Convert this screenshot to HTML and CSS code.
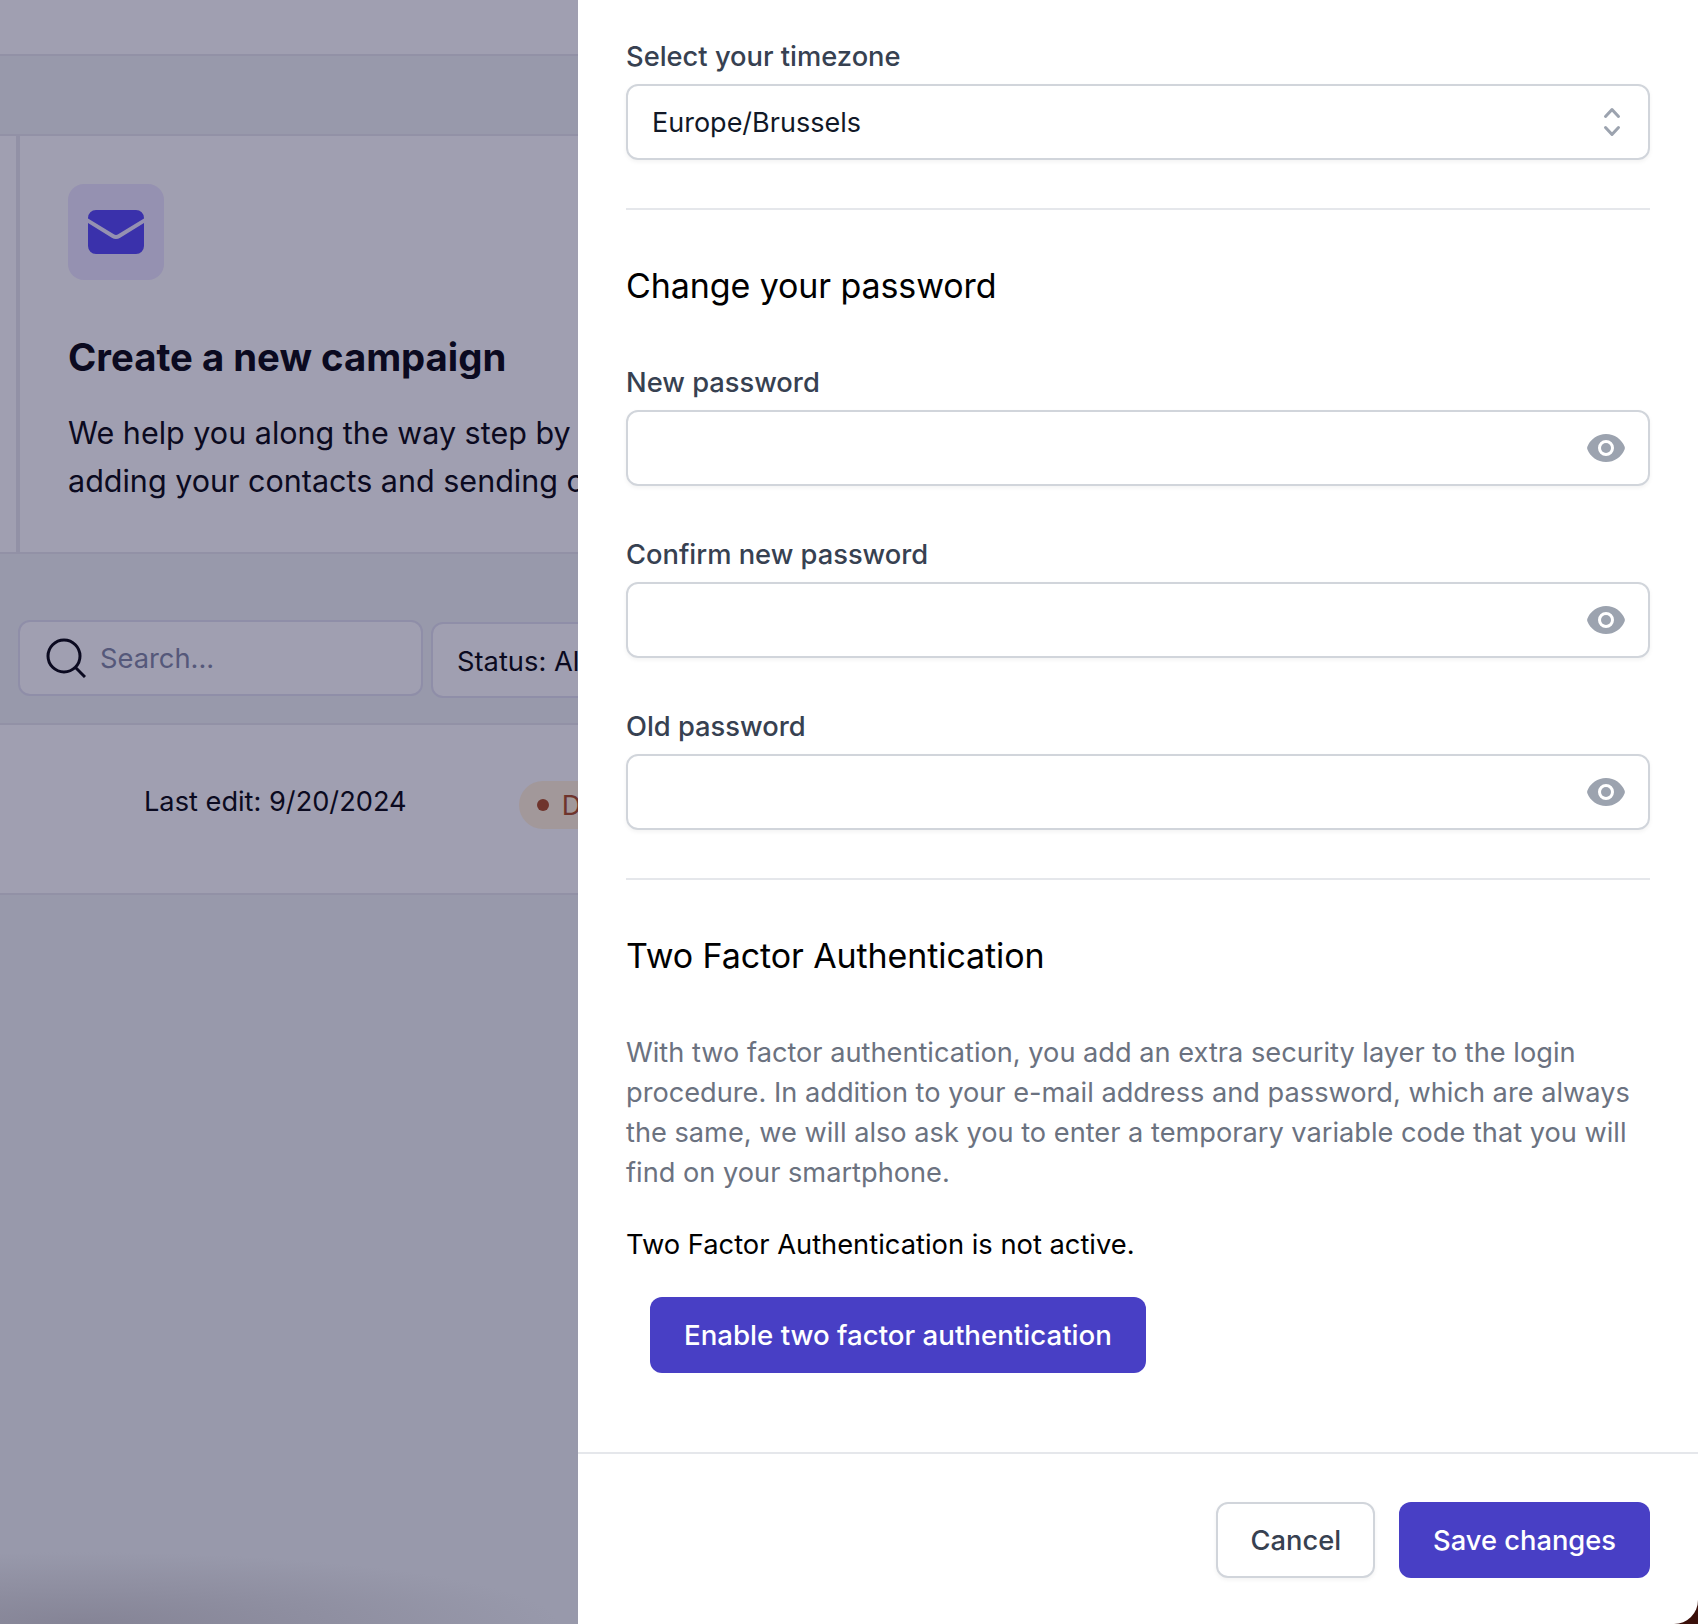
FILE: index.html
```html
<!DOCTYPE html>
<html lang="en">
<head>
    <meta charset="UTF-8">
    <meta name="viewport" content="width=device-width, initial-scale=1.0">
    <title>Account settings</title>
    <link rel="stylesheet" href="styles.css">
</head>
<body>
    <div class="page">
        <!-- Dimmed dashboard behind the slide-over -->
        <div class="backdrop">
            <div class="top-band"></div>
            <div class="sub-band"></div>
            <div class="intro-row">
                <div class="intro-card">
                    <div class="icon-box">
                        <svg class="envelope" viewBox="0 0 24 24" aria-hidden="true">
                            <path d="M1.5 8.67v8.58a3 3 0 003 3h15a3 3 0 003-3V8.67l-8.928 5.493a3 3 0 01-3.144 0L1.5 8.67z"/>
                            <path d="M22.5 6.908V6.75a3 3 0 00-3-3h-15a3 3 0 00-3 3v.158l9.714 5.978a1.5 1.5 0 001.572 0L22.5 6.908z"/>
                        </svg>
                    </div>
                    <h2 class="intro-title">Create a new campaign</h2>
                    <p class="intro-text">We help you along the way step by step, from<br>adding your contacts and sending campaigns</p>
                </div>
            </div>
            <div class="filter-row">
                <div class="search-box">
                    <svg class="search-icon" viewBox="0 0 40 40" aria-hidden="true">
                        <circle cx="18" cy="18" r="16"/>
                        <line x1="29.5" y1="29.5" x2="39" y2="39"/>
                    </svg>
                    <span class="search-placeholder">Search...</span>
                </div>
                <div class="status-box">Status: All</div>
            </div>
            <div class="list-row">
                <span class="last-edit">Last edit: 9/20/2024</span>
                <span class="badge"><span class="badge-dot"></span>Draft</span>
            </div>
            <div class="backdrop-rest"></div>
        </div>

        <!-- Slide-over panel -->
        <div class="panel">
            <div class="panel-body">
                <label class="field-label">Select your timezone</label>
                <div class="field">
                    <span class="field-value">Europe/Brussels</span>
                    <svg class="chevrons" viewBox="0 0 20 20" aria-hidden="true">
                        <path fill-rule="evenodd" clip-rule="evenodd" d="M10 3a.75.75 0 01.55.24l3.25 3.5a.75.75 0 11-1.1 1.02L10 4.852 7.3 7.76a.75.75 0 01-1.1-1.02l3.25-3.5A.75.75 0 0110 3zm-3.76 9.2a.75.75 0 011.06.04l2.7 2.908 2.7-2.908a.75.75 0 111.1 1.02l-3.25 3.5a.75.75 0 01-1.1 0l-3.25-3.5a.75.75 0 01.04-1.06z"/>
                    </svg>
                </div>

                <hr class="divider">

                <h3 class="section-title">Change your password</h3>

                <label class="field-label spaced">New password</label>
                <div class="field">
                    <svg class="eye" viewBox="0 0 20 20" aria-hidden="true">
                        <path d="M10 12.5a2.5 2.5 0 100-5 2.5 2.5 0 000 5z"/>
                        <path fill-rule="evenodd" clip-rule="evenodd" d="M.664 10.59a1.651 1.651 0 010-1.186A10.004 10.004 0 0110 3c4.257 0 7.893 2.66 9.336 6.41.147.381.146.804 0 1.186A10.004 10.004 0 0110 17c-4.257 0-7.893-2.66-9.336-6.41zM14 10a4 4 0 11-8 0 4 4 0 018 0z"/>
                    </svg>
                </div>

                <label class="field-label spaced">Confirm new password</label>
                <div class="field">
                    <svg class="eye" viewBox="0 0 20 20" aria-hidden="true">
                        <path d="M10 12.5a2.5 2.5 0 100-5 2.5 2.5 0 000 5z"/>
                        <path fill-rule="evenodd" clip-rule="evenodd" d="M.664 10.59a1.651 1.651 0 010-1.186A10.004 10.004 0 0110 3c4.257 0 7.893 2.66 9.336 6.41.147.381.146.804 0 1.186A10.004 10.004 0 0110 17c-4.257 0-7.893-2.66-9.336-6.41zM14 10a4 4 0 11-8 0 4 4 0 018 0z"/>
                    </svg>
                </div>

                <label class="field-label spaced">Old password</label>
                <div class="field">
                    <svg class="eye" viewBox="0 0 20 20" aria-hidden="true">
                        <path d="M10 12.5a2.5 2.5 0 100-5 2.5 2.5 0 000 5z"/>
                        <path fill-rule="evenodd" clip-rule="evenodd" d="M.664 10.59a1.651 1.651 0 010-1.186A10.004 10.004 0 0110 3c4.257 0 7.893 2.66 9.336 6.41.147.381.146.804 0 1.186A10.004 10.004 0 0110 17c-4.257 0-7.893-2.66-9.336-6.41zM14 10a4 4 0 11-8 0 4 4 0 018 0z"/>
                    </svg>
                </div>

                <hr class="divider">

                <h3 class="section-title">Two Factor Authentication</h3>

                <p class="help-text">With two factor authentication, you add an extra security layer to the login procedure. In addition to your e-mail address and password, which are always the same, we will also ask you to enter a temporary variable code that you will find on your smartphone.</p>
                <p class="tfa-status">Two Factor Authentication is not active.</p>
                <button class="btn btn-primary btn-enable">Enable two factor authentication</button>
            </div>

            <div class="panel-footer">
                <button class="btn btn-secondary">Cancel</button>
                <button class="btn btn-primary">Save changes</button>
            </div>
        </div>
    </div>
</body>
</html>
```

FILE: styles.css
```css
:root {
    --dim-light: #a09fb1;
    --dim-dark: #9899ab;
    --dim-border: #9291a6;
    --dim-text: #0b0a20;
    --indigo: #483fc5;
    --line: #e5e7eb;
    --input-border: #d1d5db;
    --text-size: 27.3px;
}

* {
    box-sizing: border-box;
}

html, body {
    margin: 0;
    height: 100%;
}

body {
    font-family: Inter, "Liberation Sans", sans-serif;
    background: #3a0f0a;
}

.page {
    display: flex;
    height: 1624px;
    overflow: hidden;
}

/* Backdrop */
.backdrop {
    width: 578px;
    flex-shrink: 0;
    display: flex;
    flex-direction: column;
    overflow: hidden;
    background: var(--dim-dark);
    color: var(--dim-text);
}

.top-band {
    height: 56px;
    flex-shrink: 0;
    background: var(--dim-light);
    border-bottom: 2px solid var(--dim-border);
}

.sub-band {
    height: 80px;
    flex-shrink: 0;
    border-bottom: 2px solid var(--dim-border);
}

.intro-row {
    height: 418px;
    flex-shrink: 0;
    padding-left: 16px;
    background: var(--dim-light);
    border-bottom: 2px solid var(--dim-border);
}

.intro-card {
    width: 800px;
    height: 100%;
    padding: 48px 0 0 48px;
    border-left: 4px solid var(--dim-border);
}

.icon-box {
    width: 96px;
    height: 96px;
    display: flex;
    align-items: center;
    justify-content: center;
    border-radius: 16px;
    background: #9591b1;
}

.envelope {
    width: 64px;
    height: 64px;
    fill: #3a31ab;
}

.intro-title {
    margin: 49px 0 0;
    font-size: 38.3px;
    line-height: 56px;
    font-weight: 700;
    white-space: nowrap;
}

.intro-text {
    margin: 24px 0 0;
    font-size: 30.5px;
    line-height: 48px;
    white-space: nowrap;
}

.filter-row {
    height: 171px;
    flex-shrink: 0;
    display: flex;
    align-items: flex-start;
    gap: 8px;
    padding: 66px 0 0 18px;
    border-bottom: 2px solid var(--dim-border);
}

.search-box {
    width: 405px;
    height: 76px;
    flex-shrink: 0;
    display: flex;
    align-items: center;
    gap: 14px;
    padding-left: 26px;
    background: var(--dim-light);
    border: 2px solid #8f8ea8;
    border-radius: 12px;
}

.search-icon {
    width: 40px;
    height: 40px;
    fill: none;
    stroke: var(--dim-text);
    stroke-width: 3;
}

.search-placeholder {
    padding-top: 1px;
    font-size: var(--text-size);
    color: #55587a;
}

.status-box {
    width: 400px;
    height: 76px;
    flex-shrink: 0;
    margin-top: 2px;
    padding: 18px 24px 0;
    font-size: var(--text-size);
    line-height: 40px;
    background: var(--dim-light);
    border: 2px solid #8f8ea8;
    border-radius: 12px;
}

.list-row {
    height: 170px;
    flex-shrink: 0;
    display: flex;
    align-items: flex-start;
    padding: 57px 0 0 144px;
    background: var(--dim-light);
    border-bottom: 2px solid var(--dim-border);
}

.last-edit {
    font-size: 27.2px;
    line-height: 40px;
    white-space: nowrap;
}

.badge {
    flex-shrink: 0;
    display: flex;
    align-items: center;
    gap: 13px;
    height: 48px;
    margin: -1px 0 0 112px;
    padding: 0 24px 0 18px;
    border-radius: 24px;
    background: #a2989a;
    color: #6f342c;
    font-size: var(--text-size);
}

.badge-dot {
    width: 12px;
    height: 12px;
    border-radius: 50%;
    background: #6f342c;
}

.backdrop-rest {
    flex: 1;
    background: radial-gradient(ellipse 480px 72px at 80px 100%, #858496, rgba(133, 132, 150, 0));
}

/* Panel */
.panel {
    flex: 1;
    display: flex;
    flex-direction: column;
    background: #fff;
    border-bottom-right-radius: 24px;
}

.panel-body {
    flex: 1;
    padding: 36px 48px 0;
}

.field-label {
    display: block;
    margin-bottom: 7px;
    padding-top: 1px;
    font-size: var(--text-size);
    line-height: 40px;
    font-weight: 500;
    color: #374151;
}

.field-label.spaced {
    margin-top: 48px;
}

.field {
    height: 76px;
    display: flex;
    align-items: center;
    justify-content: space-between;
    padding: 0 22px 0 24px;
    border: 2px solid var(--input-border);
    border-radius: 12px;
    box-shadow: 0 2px 4px rgba(0, 0, 0, 0.05);
}

.field-value {
    font-size: 27px;
    color: #111827;
}

.chevrons {
    width: 40px;
    height: 40px;
    margin-left: auto;
    margin-right: -6px;
    fill: #9ca3af;
}

.eye {
    width: 40px;
    height: 40px;
    margin-left: auto;
    fill: #9ca3af;
}

.divider {
    height: 2px;
    margin: 48px 0;
    border: 0;
    background: var(--line);
}

.section-title {
    margin: 0;
    font-size: 34px;
    line-height: 56px;
    font-weight: 400;
    letter-spacing: -0.1px;
    color: #000;
}

.help-text {
    margin: 49px 0 0;
    font-size: 27.2px;
    line-height: 40px;
    color: #6b7280;
}

.tfa-status {
    margin: 32px 0 0;
    font-size: var(--text-size);
    line-height: 40px;
    color: #000;
}

.btn {
    height: 76px;
    padding: 0 34px;
    border: 0;
    border-radius: 12px;
    font-family: inherit;
    font-size: 27.3px;
    font-weight: 500;
    cursor: pointer;
}

.btn-primary {
    background: var(--indigo);
    color: #fff;
}

.btn-secondary {
    padding: 0 32px;
    background: #fff;
    color: #374151;
    border: 2px solid var(--input-border);
    box-shadow: 0 2px 4px rgba(0, 0, 0, 0.05);
}

.btn-enable {
    display: block;
    margin: 32px 0 0 24px;
    font-size: 27.65px;
}

.panel-footer {
    display: flex;
    justify-content: flex-end;
    gap: 24px;
    padding: 48px 48px 46px;
    border-top: 2px solid var(--line);
}
```
